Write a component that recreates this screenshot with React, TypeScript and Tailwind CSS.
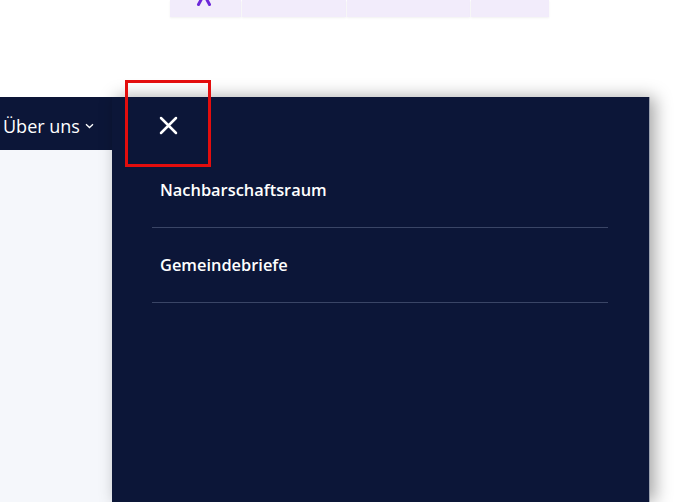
import React from "react";

const NAVY = "bg-[#0c1638]";

function TopTabs() {
  return (
    <div className="flex h-[17px] pl-[170px] gap-[1px]">
      <div className="w-[71px] bg-[#f2ecfb] flex justify-center shadow-[0_1px_2px_rgba(0,0,0,0.06)]">
        <svg width="18" height="8" viewBox="0 0 18 8" className="-ml-[4px]">
          <path d="M7 -2 L3.5 4.5 M11 -2 L14.5 4.5" stroke="#6d28d9" strokeWidth="3" strokeLinecap="round" fill="none" />
        </svg>
      </div>
      <div className="w-[104px] bg-[#f2ecfb] shadow-[0_1px_2px_rgba(0,0,0,0.06)]" />
      <div className="w-[123px] bg-[#f2ecfb] shadow-[0_1px_2px_rgba(0,0,0,0.06)]" />
      <div className="w-[78px] bg-[#f2ecfb] shadow-[0_1px_2px_rgba(0,0,0,0.06)]" />
    </div>
  );
}

function MenuItem({ label }: { label: string }) {
  return (
    <li className="border-b border-[#3a4566] h-[75px] flex items-center px-2">
      <a className="text-white text-[16.4px] font-semibold leading-none">{label}</a>
    </li>
  );
}

export default function App() {
  return (
    <div
      className="w-[678px] h-[502px] bg-white overflow-hidden flex flex-col"
      style={{ fontFamily: '"Open Sans", "Noto Sans", sans-serif' }}
    >
      <TopTabs />
      <div className="h-[80px]" />
      <div className="flex flex-1">
        <div className="w-[112px] flex flex-col">
          <div className={`${NAVY} h-[53px] flex items-center pl-[3px] gap-[5px] text-white`}>
            <span className="text-[18px] leading-none mt-[4px]">Über uns</span>
            <svg width="9" height="6" viewBox="0 0 9 6" className="mt-[4px]">
              <path d="M1 1.2 L4.5 4.5 L8 1.2" stroke="white" strokeWidth="1.3" fill="none" />
            </svg>
          </div>
          <div className="flex-1 bg-[#f5f7fb]" />
        </div>
        <div
          className={`relative w-[538px] ${NAVY} shadow-[5px_0_16px_rgba(0,0,0,0.35)] border-r border-[#9aa0ad]`}
        >
          <div className="h-[56px] flex items-center pl-[47px]">
            <button className="w-[19px] h-[19px] flex items-center justify-center mt-[1px]">
              <svg width="19" height="19" viewBox="0 0 19 19">
                <path d="M2 2 L17 17 M17 2 L2 17" stroke="white" strokeWidth="2.5" strokeLinecap="round" />
              </svg>
            </button>
          </div>
          <div className="absolute left-[13px] top-[-17px] w-[86px] h-[87px] border-[3px] border-[#e30d0d] pointer-events-none" />
          <ul className="pl-[40px] pr-[41px]">
            <MenuItem label="Nachbarschaftsraum" />
            <MenuItem label="Gemeindebriefe" />
          </ul>
        </div>
      </div>
    </div>
  );
}
